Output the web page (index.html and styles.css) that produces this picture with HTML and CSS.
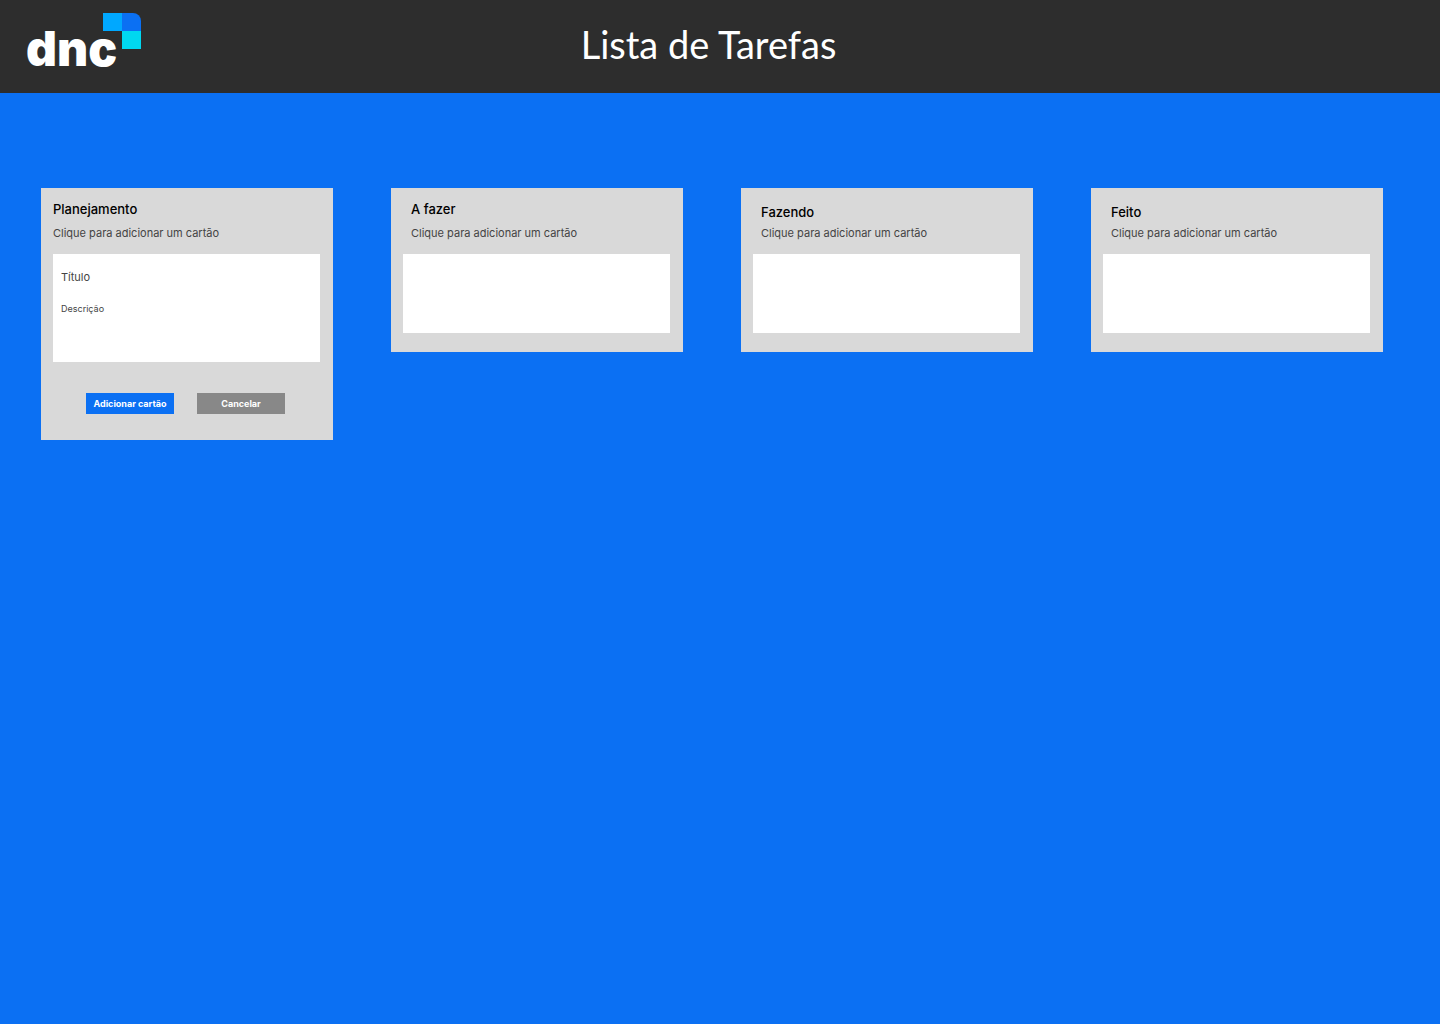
FILE: index.html
```html
<!DOCTYPE html>
<html lang="pt-BR">
<head>
  <meta charset="utf-8">
  <meta name="viewport" content="width=device-width, initial-scale=1">
  <title>Lista de Tarefas</title>
  <link rel="stylesheet" href="styles.css">
</head>
<body>
  <header class="topbar">
    <svg class="logo" width="114" height="56" viewBox="0 0 114 56" role="img" aria-label="dnc">
      <rect x="76" y="0" width="19" height="18" fill="#00a8ff"/>
      <path d="M95 0h11a8 8 0 0 1 8 8v10H95z" fill="#0b70f3"/>
      <rect x="95" y="18" width="19" height="18" fill="#00d8f0"/>
      <text class="logo-text" x="-1" y="53">dnc</text>
    </svg>
    <h1 class="page-title">Lista de Tarefas</h1>
  </header>

  <main class="board">
    <section class="column column-editing">
      <div class="column-head">
        <h2 class="column-title">Planejamento</h2>
        <button class="add-link" type="button">Clique para adicionar um cartão</button>
      </div>
      <form class="card-form">
        <div class="card card-fields">
          <input class="field field-title" type="text" placeholder="Título" aria-label="Título">
          <textarea class="field field-text" placeholder="Descrição" aria-label="Descrição"></textarea>
        </div>
        <div class="actions">
          <button class="btn btn-primary" type="submit">Adicionar cartão</button>
          <button class="btn btn-secondary" type="button">Cancelar</button>
        </div>
      </form>
    </section>

    <section class="column">
      <div class="column-head">
        <h2 class="column-title">A fazer</h2>
        <button class="add-link" type="button">Clique para adicionar um cartão</button>
      </div>
      <div class="card"></div>
    </section>

    <section class="column column-compact">
      <div class="column-head">
        <h2 class="column-title">Fazendo</h2>
        <button class="add-link" type="button">Clique para adicionar um cartão</button>
      </div>
      <div class="card"></div>
    </section>

    <section class="column column-compact">
      <div class="column-head">
        <h2 class="column-title">Feito</h2>
        <button class="add-link" type="button">Clique para adicionar um cartão</button>
      </div>
      <div class="card"></div>
    </section>
  </main>
</body>
</html>
```
FILE: styles.css
```css
* {
  box-sizing: border-box;
}

body {
  margin: 0;
  min-height: 100vh;
  background: #0b70f3;
  color: #000;
  font-family: Inter, sans-serif;
}

.topbar {
  display: grid;
  grid-template-columns: 1fr auto 1fr;
  align-items: start;
  min-height: 93px;
  padding: 13px 50px 13px 27px;
  background: #2d2d2d;
}

.logo {
  display: block;
  overflow: visible;
}

.logo-text {
  fill: #fff;
  font-family: Inter, sans-serif;
  font-size: 48px;
  font-weight: 900;
}

.page-title {
  margin: 0;
  padding-top: 9px;
  color: #fff;
  font-family: Lato, sans-serif;
  font-size: 38px;
  font-weight: 400;
  line-height: 44px;
}

.board {
  display: grid;
  grid-template-columns: repeat(auto-fit, minmax(240px, 1fr));
  align-items: start;
  gap: 58px;
  padding: 95px 57px 58px 41px;
}

.column {
  padding: 13px 13px 19px 12px;
  background: #d9d9d9;
}

.column-head {
  display: flex;
  flex-direction: column;
  align-items: flex-start;
  gap: 8px;
  padding: 0 0 13px 8px;
}

.column-title {
  margin: 0;
  font-size: 13px;
  font-weight: 500;
  line-height: 16px;
}

.add-link {
  padding: 0;
  border: 0;
  background: none;
  color: #444;
  font: 400 11px/16px Inter, sans-serif;
  text-align: left;
  cursor: pointer;
}

.column-compact {
  padding-top: 16px;
}

.column-compact .column-head {
  gap: 5px;
}

.column-editing {
  padding-bottom: 26px;
}

.column-editing .column-head {
  padding-left: 0;
}

.card {
  min-height: 79px;
  background: #fff;
}

.card-fields {
  display: flex;
  flex-direction: column;
  gap: 16px;
  padding: 15px 8px 5px;
}

.field {
  width: 100%;
  padding: 0;
  border: 0;
  outline: 0;
  background: none;
  color: #444;
  font-family: Inter, sans-serif;
  line-height: 16px;
}

.field::placeholder {
  color: #444;
  opacity: 1;
}

.field-title {
  height: 16px;
  font-size: 11px;
}

.field-text {
  height: 56px;
  font-size: 9px;
  resize: none;
}

.actions {
  display: flex;
  justify-content: center;
  gap: 23px;
  padding: 31px 2px 0 0;
}

.btn {
  width: 88px;
  height: 21px;
  padding: 0;
  border: 0;
  color: #fff;
  font: 700 9px/21px Inter, sans-serif;
  white-space: nowrap;
  cursor: pointer;
}

.btn-primary {
  background: #0b70f3;
}

.btn-secondary {
  background: #888;
}
```
